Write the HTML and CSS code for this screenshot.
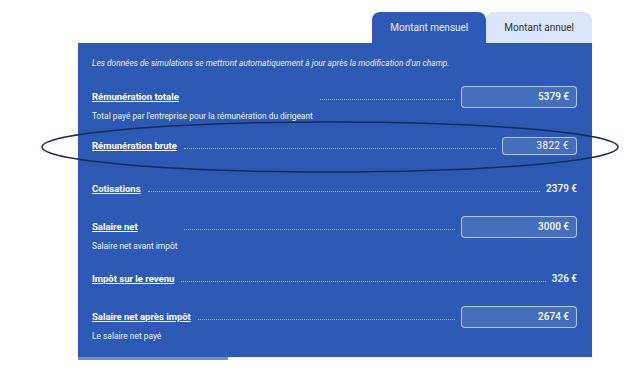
FILE: index.html
```html
<!DOCTYPE html>
<html lang="fr">
<head>
  <meta charset="UTF-8" />
  <meta name="viewport" content="width=device-width, initial-scale=1.0" />
  <title>Simulation rémunération</title>
  <link rel="stylesheet" href="styles.css">
</head>
<body>
  <div class="page">
    <div class="tabs">
      <button class="tab active">Montant mensuel</button>
      <button class="tab">Montant annuel</button>
    </div>

    <div class="panel">
      <p class="note">Les données de simulations se mettront automatiquement à jour après la modification d'un champ.</p>

      <div class="row">
        <div class="label">
          <a class="title">Rémunération totale</a>
          <p class="desc">Total payé par l'entreprise pour la rémunération du dirigeant</p>
        </div>
        <div class="dots"></div>
        <div class="field">5379 €</div>
      </div>

      <div class="row compact">
        <div class="label">
          <a class="title">Rémunération brute</a>
        </div>
        <div class="dots"></div>
        <div class="field small">3822 €</div>
      </div>

      <div class="row">
        <div class="label">
          <a class="title">Cotisations</a>
        </div>
        <div class="dots"></div>
        <div class="amount">2379 €</div>
      </div>

      <div class="row">
        <div class="label">
          <a class="title">Salaire net</a>
          <p class="desc">Salaire net avant impôt</p>
        </div>
        <div class="dots"></div>
        <div class="field">3000 €</div>
      </div>

      <div class="row">
        <div class="label">
          <a class="title">Impôt sur le revenu</a>
        </div>
        <div class="dots"></div>
        <div class="amount">326 €</div>
      </div>

      <div class="row">
        <div class="label">
          <a class="title">Salaire net après impôt</a>
          <p class="desc">Le salaire net payé</p>
        </div>
        <div class="dots"></div>
        <div class="field">2674 €</div>
      </div>
    </div>
    <div class="progress"></div>
  </div>

  <svg class="highlight" width="635" height="371" viewBox="0 0 635 371">
    <ellipse cx="330" cy="147" rx="288" ry="25" fill="none" stroke="#1b2a56" stroke-width="1.5" />
  </svg>
</body>
</html>
```

FILE: styles.css
```css
body {
  margin: 0;
  background: #fff;
  font-family: Roboto, "Liberation Sans", sans-serif;
  color: #fff;
}
.page {
  width: 514px;
  padding: 12px 0 0 78px;
}
.tabs {
  display: flex;
  justify-content: flex-end;
  height: 31px;
}
.tab {
  border: none;
  border-radius: 8px 8px 0 0;
  padding: 0 18px;
  font-family: inherit;
  font-size: 10px;
  background: #dce6fa;
  color: #333;
}
.tab.active {
  background: #2c5ab4;
  color: #e9efff;
  padding: 0 18px;
}
.panel {
  background: #2c5ab4;
  padding: 14px 15px 15px 14px;
  display: flex;
  flex-direction: column;
  gap: 16px;
  box-shadow: 0 1px 2px rgba(0,0,0,0.08);
}
.note {
  margin: 0 0 1px;
  font-size: 8.4px;
  line-height: 12px;
  font-style: italic;
  color: #e4ebfb;
}
.row {
  display: flex;
  align-items: flex-start;
}
.row.compact {
  margin: -3px 0 5px;
}
.label {
  display: flex;
  flex-direction: column;
}
.title {
  font-size: 9.5px;
  line-height: 22px;
  font-weight: bold;
  text-decoration: underline;
  color: #fff;
}
.desc {
  margin: 2px 0 0;
  font-size: 8.4px;
  line-height: 12px;
  color: #eef2fc;
}
.dots {
  flex: 1;
  height: 13px;
  margin: 0 6px 0 7px;
  border-bottom: 1px dotted rgba(255,255,255,0.55);
}
.field {
  width: 116px;
  height: 22px;
  box-sizing: border-box;
  border: 1px solid rgba(255,255,255,0.6);
  border-radius: 4px;
  background: rgba(255,255,255,0.12);
  padding-right: 7px;
  text-align: right;
  font-size: 10px;
  line-height: 20px;
  font-weight: 500;
}
.field.small {
  width: 75px;
  height: 18px;
  margin-top: 2px;
  line-height: 16px;
  font-weight: normal;
  letter-spacing: 0.3px;
}
.amount {
  font-size: 10px;
  line-height: 22px;
  font-weight: 500;
}
.progress {
  width: 150px;
  height: 3px;
  background: #6a90d9;
}
.highlight {
  position: absolute;
  top: 0;
  left: 0;
  pointer-events: none;
}
```
